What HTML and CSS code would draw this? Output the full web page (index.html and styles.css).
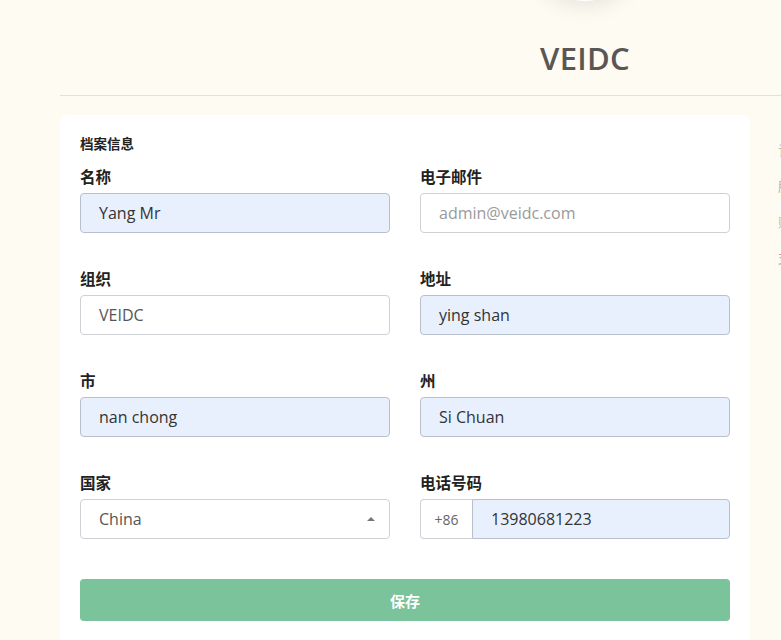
FILE: index.html
```html
<!DOCTYPE html>
<html lang="zh-CN">
<head>
<meta charset="utf-8">
<title>VEIDC</title>
<link rel="stylesheet" href="styles.css">
</head>
<body>
<div class="page">
  <header class="header">
    <div class="avatar"></div>
    <h1 class="brand">VEIDC</h1>
  </header>
  <div class="main">
    <section class="card">
      <div class="card-title">档案信息</div>
      <div class="form-grid">
        <div class="field">
          <label class="label">名称</label>
          <div class="input filled">Yang Mr</div>
        </div>
        <div class="field">
          <label class="label">电子邮件</label>
          <div class="input placeholder">admin@veidc.com</div>
        </div>
        <div class="field">
          <label class="label">组织</label>
          <div class="input plain">VEIDC</div>
        </div>
        <div class="field">
          <label class="label">地址</label>
          <div class="input filled">ying shan</div>
        </div>
        <div class="field">
          <label class="label">市</label>
          <div class="input filled">nan chong</div>
        </div>
        <div class="field">
          <label class="label">州</label>
          <div class="input filled">Si Chuan</div>
        </div>
        <div class="field">
          <label class="label">国家</label>
          <div class="input select"><span>China</span><span class="caret"></span></div>
        </div>
        <div class="field">
          <label class="label">电话号码</label>
          <div class="phone">
            <span class="prefix">+86</span>
            <span class="input filled phone-input">13980681223</span>
          </div>
        </div>
      </div>
      <button class="save">保存</button>
    </section>
    <aside class="side">
      <div class="side-item">订单</div>
      <div class="side-item red">服务</div>
      <div class="side-item">账单</div>
      <div class="side-item red">支持</div>
    </aside>
  </div>
</div>
</body>
</html>
```

FILE: styles.css
```css
html, body {
  margin: 0;
  padding: 0;
  overflow: hidden;
}
body {
  background: #fefbf3;
  font-family: "Open Sans", "Noto Sans CJK SC", sans-serif;
  color: #333;
}
.page {
  margin-left: 60px;
  width: 1050px;
}
.header {
  display: flex;
  flex-direction: column;
  align-items: center;
  border-bottom: 1px solid #e4e1d9;
  padding-bottom: 19px;
}
.avatar {
  width: 110px;
  height: 110px;
  border-radius: 50%;
  background: #fff;
  margin-top: -109px;
  box-shadow: 0 4px 22px rgba(0, 0, 0, 0.10);
}
.brand {
  margin: 39px 0 0;
  font-family: "Open Sans", sans-serif;
  font-weight: 600;
  font-size: 31px;
  line-height: 36px;
  letter-spacing: 0.3px;
  color: #5a5654;
}
.main {
  display: grid;
  grid-template-columns: 690px 330px;
  column-gap: 28px;
  margin-top: 19px;
}
.card {
  background: #fff;
  border-radius: 8px;
  padding: 19px 20px 40px;
  height: 600px;
}
.card-title {
  font-family: "Noto Sans CJK SC", sans-serif;
  font-weight: 700;
  font-size: 13.5px;
  line-height: 18px;
  color: #222;
  margin-bottom: 12px;
}
.form-grid {
  display: grid;
  grid-template-columns: 310px 310px;
  column-gap: 30px;
  row-gap: 33px;
}
.field {
  display: flex;
  flex-direction: column;
}
.label {
  font-family: "Noto Sans CJK SC", sans-serif;
  font-weight: 700;
  font-size: 15.5px;
  line-height: 24px;
  color: #222;
  margin-bottom: 5px;
}
.input {
  box-sizing: border-box;
  height: 40px;
  border: 1px solid #cfd1d6;
  border-radius: 4px;
  padding: 0 18px;
  display: flex;
  align-items: center;
  font-size: 16px;
  background: #fff;
  color: #333;
}
.input.filled {
  background: #e8f0fe;
  border-color: #b9c0cb;
}
.input.placeholder {
  color: #9a9a9a;
}
.input.plain {
  color: #555;
}
.input.select {
  justify-content: space-between;
  color: #555;
}
.caret {
  width: 0;
  height: 0;
  border-left: 4px solid transparent;
  border-right: 4px solid transparent;
  border-bottom: 4px solid #777;
  margin-right: -4px;
}
.phone {
  display: flex;
  height: 40px;
}
.prefix {
  box-sizing: border-box;
  width: 52px;
  border: 1px solid #cfd1d6;
  border-right: none;
  border-radius: 4px 0 0 4px;
  display: flex;
  align-items: center;
  justify-content: center;
  font-size: 14px;
  color: #666;
  background: #fff;
}
.phone-input {
  flex: 1;
  border-radius: 0 4px 4px 0;
}
.save {
  display: block;
  width: 100%;
  height: 42px;
  margin-top: 40px;
  border: none;
  border-radius: 4px;
  background: #7bc39a;
  color: #fff;
  font-family: "Noto Sans CJK SC", sans-serif;
  font-weight: 700;
  font-size: 15px;
}
.side {
  padding-top: 26px;
  display: flex;
  flex-direction: column;
  gap: 18px;
}
.side-item {
  font-size: 13px;
  line-height: 18px;
  color: #bbb;
}
.side-item.red {
  color: #d9a0a0;
}
```
